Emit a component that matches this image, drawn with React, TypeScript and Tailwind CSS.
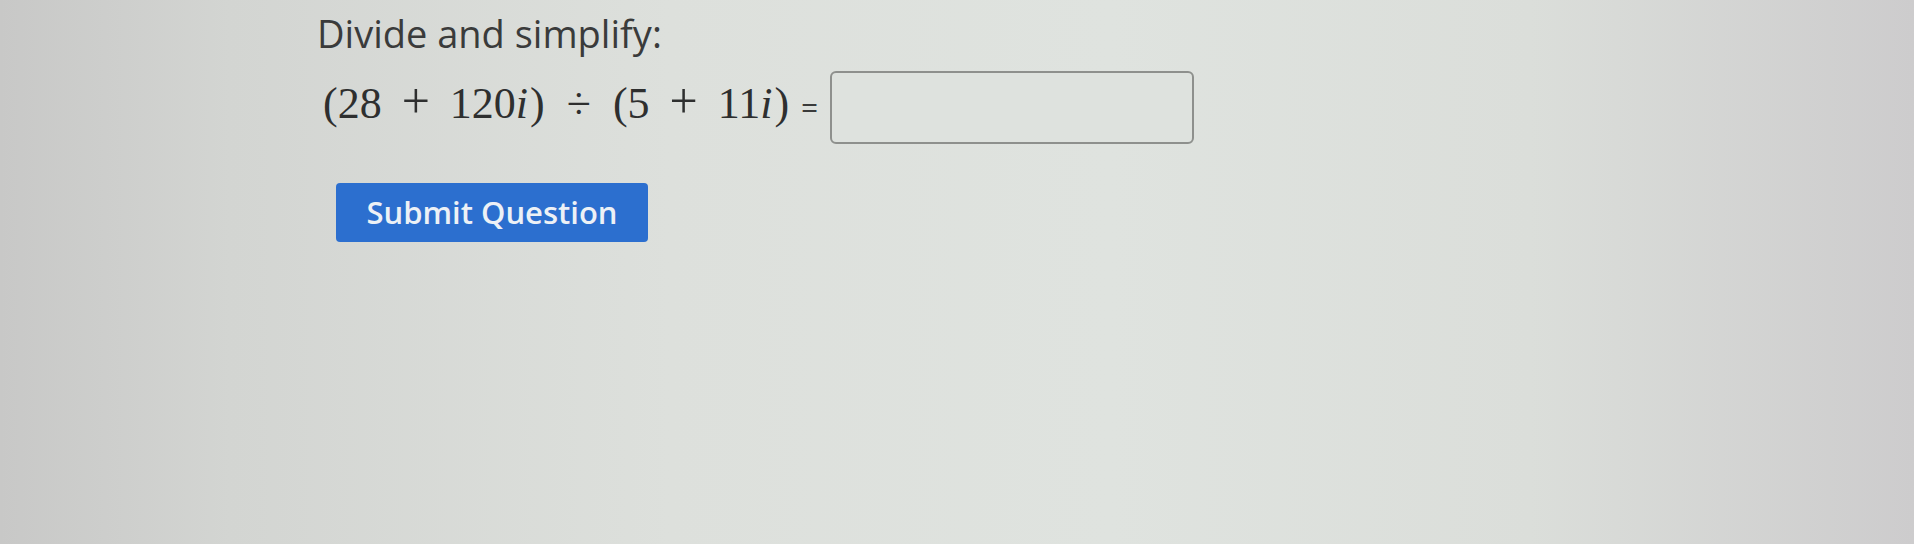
export default function App() {
  return (
    <div className="relative min-h-screen w-full overflow-hidden bg-[linear-gradient(90deg,#c8c8c7_0%,#d3d5d2_12%,#dde0dc_35%,#dfe3df_58%,#dbdeda_80%,#cdcccd_100%)] pl-[317px] pt-[10px] font-['Open_Sans',sans-serif]">
      {/* Question text */}
      <p className="text-[38px] leading-[46px] text-[#3a3b3b]">Divide and simplify:</p>

      {/* Expression + answer box */}
      <div className="mt-[15px] flex items-start">
        <div className="ml-[6px] flex items-baseline">
          <span className="whitespace-nowrap font-['Liberation_Serif',serif] text-[44px] leading-normal text-[#2e2f2f]">
            (28
            <span className="mx-[20px] text-[50px] leading-none">+</span>
            120<span className="italic pr-[2px]">i</span>)
            <span className="mx-[22px]">÷</span>
            (5
            <span className="mx-[20px] text-[50px] leading-none">+</span>
            11<span className="italic pr-[2px]">i</span>)
          </span>
          <span className="ml-[12px] text-[30px] text-[#3a3b3b]">=</span>
        </div>
        <div className="ml-[12px] h-[73px] w-[364px] rounded-[6px] border-2 border-[#8e908d] bg-[#dee2de]" />
      </div>

      {/* Submit */}
      <button className="ml-[19px] mt-[39px] flex h-[59px] w-[312px] items-center justify-center rounded-[4px] bg-[#2c6fcf] text-[31px] font-semibold text-[#edf1f6]">
        Submit Question
      </button>
    </div>
  );
}
